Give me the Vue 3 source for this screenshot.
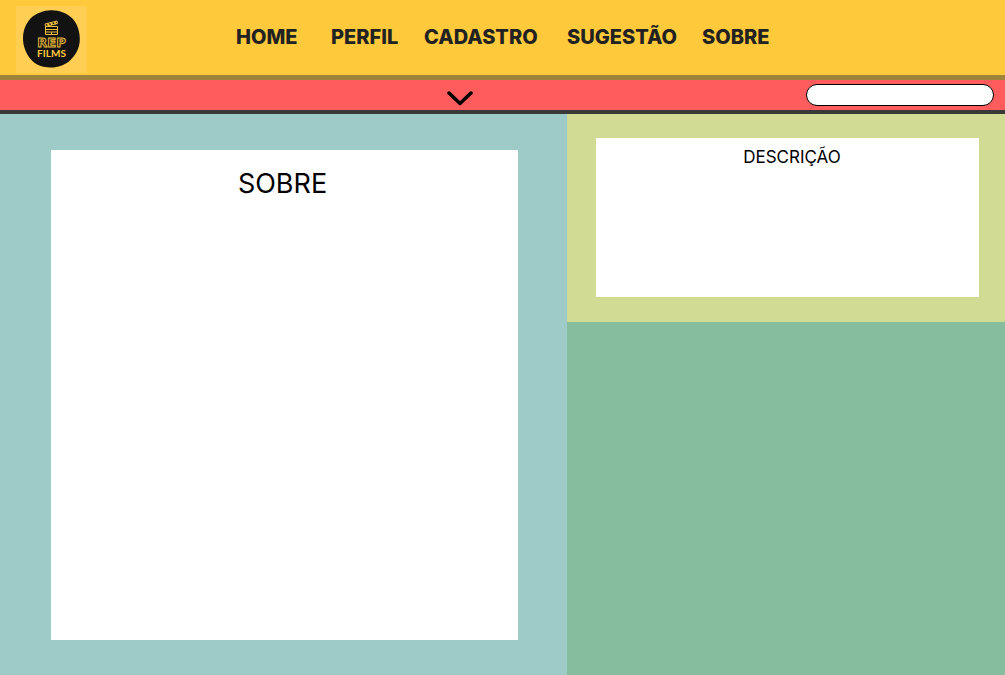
<script setup>
import { ref } from 'vue'

const links = ['HOME', 'PERFIL', 'CADASTRO', 'SUGESTÃO', 'SOBRE']
const query = ref('')
</script>

<template>
  <div class="page">
    <header class="top">
      <a class="logo" href="#" aria-label="Rep Films">
        <svg viewBox="0 0 71 67" width="71" height="67">
          <path
            d="M35 4.200C43 4 51 7 56.500 12.500C61.500 18 64 26 63.800 34C63.500 42 60 49 54 54.500C48.500 59.500 41 61.800 34 61.500C27 61.200 20.500 59.500 15.500 54C10 48 7 40 7 32.500C7 25 9.500 18 14.500 12.500C20 7 28 4.400 35 4.200Z"
            fill="#121212"
          />
          <g fill="none" stroke="#edbd3c" stroke-width="1">
            <path d="M29.500 20.500H41.500V28.500H29.500ZM29.500 23.500H41.500M29.500 26H41.500M35.500 26V28.500" />
            <path d="M29 18L41 15L41.500 17.500L29.500 20.500Z" />
            <path d="M31.500 17.500L33 19.500M35 16.800L36.500 18.800M38.500 16L40 18" stroke-width="2" />
          </g>
          <text class="logo-rep" x="35.500" y="41" text-anchor="middle">REP</text>
          <text class="logo-films" x="35.500" y="51" text-anchor="middle">FILMS</text>
        </svg>
      </a>
      <nav class="nav">
        <a v-for="link in links" :key="link" href="#">{{ link }}</a>
      </nav>
    </header>

    <div class="bar">
      <button class="toggle" type="button" aria-label="Abrir menu">
        <svg viewBox="0 0 26 15" width="26" height="15">
          <path d="M2 2L13 12.500L24 2" fill="none" stroke="#000" stroke-width="3.500" stroke-linecap="round" stroke-linejoin="round" />
        </svg>
      </button>
      <input v-model="query" class="search" type="search" aria-label="Pesquisar" />
    </div>

    <main class="content">
      <section class="about">
        <div class="card">
          <h1>SOBRE</h1>
        </div>
      </section>
      <div class="side">
        <section class="description">
          <div class="card">
            <h2>DESCRIÇÃO</h2>
          </div>
        </section>
        <div class="filler"></div>
      </div>
    </main>
  </div>
</template>

<style>
body {
  margin: 0;
}
</style>

<style scoped>
.page {
  min-height: 100vh;
  display: flex;
  flex-direction: column;
  font-family: Inter, "Liberation Sans", sans-serif;
  color: #000;
}

.top {
  display: grid;
  grid-template-columns: 16fr 71px 149fr 532px 237fr;
  align-items: center;
  height: 75px;
  background: #ffc93c;
  border-bottom: 5px solid #9f833b;
}

.logo {
  grid-column: 2;
  height: 67px;
  margin-top: 4px;
  background: #ffce52;
}

.logo svg {
  display: block;
}

.logo-rep {
  font: bold 13px "DejaVu Sans", sans-serif;
  fill: #121212;
  stroke: #edbd3c;
  stroke-width: 1px;
}

.logo-films {
  font: bold 10px Lato, sans-serif;
  fill: #ffc93c;
}

.nav {
  grid-column: 4;
  display: grid;
  grid-template-columns: 95px 93px 143px 135px 66px;
  padding-bottom: 2px;
}

.nav a {
  color: #222;
  font-size: 20px;
  line-height: 24px;
  font-weight: 800;
  text-decoration: none;
  white-space: nowrap;
}

.bar {
  display: grid;
  grid-template-columns: 447fr 26px 333fr 188px 11px;
  align-items: center;
  height: 30px;
  background: #ff5d5d;
  border-bottom: 4px solid #393939;
}

.toggle {
  grid-column: 2;
  padding: 6px 0 0;
  border: 0;
  background: none;
  cursor: pointer;
}

.toggle svg {
  display: block;
}

.search {
  grid-column: 4;
  box-sizing: border-box;
  width: 100%;
  height: 22px;
  padding: 0 10px;
  border: 1px solid #000;
  border-radius: 11px;
  background: #fff;
  font: 14px Inter, sans-serif;
  appearance: none;
  outline: none;
}

.content {
  flex: 1;
  display: grid;
  grid-template-columns: 567fr 438fr;
}

.about {
  display: flex;
  padding: 36px 49px 35px 51px;
  background: #9ecac7;
}

.card {
  flex: 1;
  background: #fff;
  text-align: center;
}

.side {
  display: flex;
  flex-direction: column;
}

.description {
  display: flex;
  padding: 24px 26px 25px 29px;
  background: #d2db94;
}

.description .card {
  min-height: 159px;
}

.filler {
  flex: 1;
  background: #86bd9e;
}

h1,
h2 {
  margin: 0;
  font-weight: 400;
}

h1 {
  padding: 17px 4px 0 0;
  font-size: 27px;
  line-height: 34px;
}

h2 {
  padding: 8px 0 0 9px;
  font-size: 17px;
  line-height: 22px;
}
</style>
